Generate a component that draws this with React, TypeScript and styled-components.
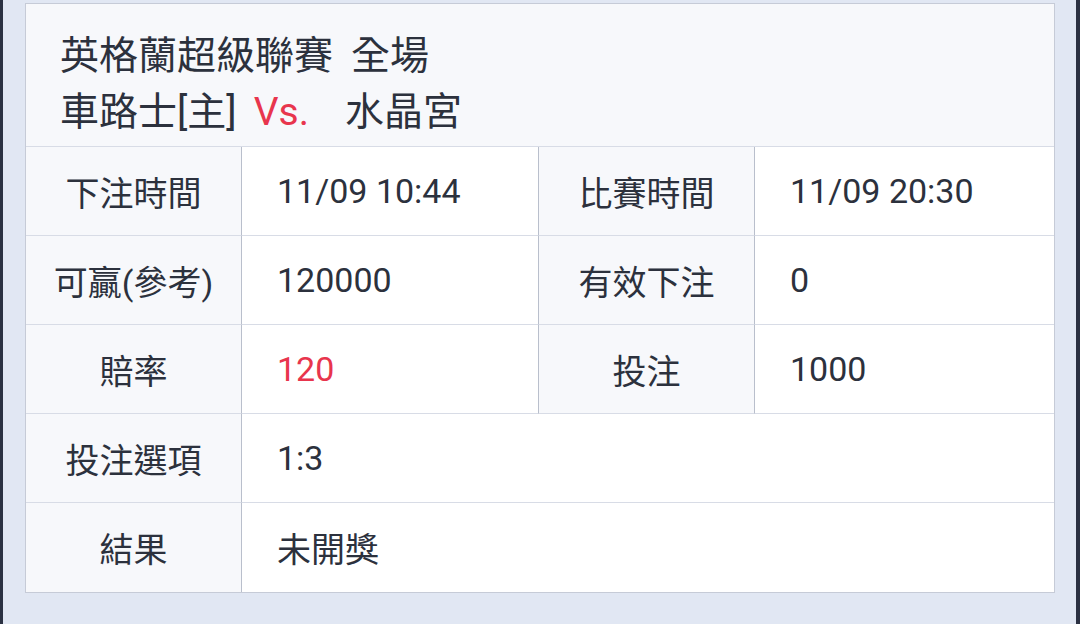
import React from 'react';
import styled, { createGlobalStyle } from 'styled-components';

const GlobalStyle = createGlobalStyle`
	html, body {
		margin: 0;
		padding: 0;
		background: #e1e7f3;
	}
	body {
		font-family: Roboto, "Noto Sans CJK TC", "Noto Sans", sans-serif;
		color: #2c313d;
	}
`;

const Screen = styled.div`
	width: 1080px;
	height: 624px;
	box-sizing: border-box;
	background: #e1e7f3;
	border-left: 3px solid #2b3142;
	border-right: 4px solid #2b3142;
	padding: 3px 21px 0 22px;
	overflow: hidden;
`;

const Card = styled.div`
	border: 1px solid #c6cbd7;
	background: #ffffff;
	display: flex;
	flex-direction: column;
`;

const Header = styled.div`
	height: 143px;
	box-sizing: border-box;
	background: #f7f8fb;
	border-bottom: 1px solid #d8dce6;
	padding: 24px 34px 0;
	font-size: 39px;
	line-height: 56px;
	display: flex;
	flex-direction: column;
`;

const HeaderLine = styled.div`
	display: flex;
	align-items: baseline;
	white-space: nowrap;
`;

const Part = styled.span<{ $gap?: number; $red?: boolean }>`
	margin-left: ${(p) => p.$gap ?? 0}px;
	color: ${(p) => (p.$red ? '#e8354d' : 'inherit')};
`;

const Grid = styled.div`
	display: grid;
	grid-template-columns: 216px 297px 216px 1fr;
	grid-auto-rows: 89px;
`;

const Cell = styled.div<{ $label?: boolean; $span?: number; $last?: boolean; $end?: boolean }>`
	display: flex;
	align-items: center;
	justify-content: ${(p) => (p.$label ? 'center' : 'flex-start')};
	padding-left: ${(p) => (p.$label ? '0' : '35px')};
	background: ${(p) => (p.$label ? '#f7f8fb' : '#ffffff')};
	grid-column: span ${(p) => p.$span ?? 1};
	border-bottom: ${(p) => (p.$last ? 'none' : '1px solid #d8dce6')};
	border-right: ${(p) => (p.$end ? 'none' : '1px solid #b9bfcc')};
	font-size: 34px;
`;

const Value = styled.span<{ $red?: boolean }>`
	color: ${(p) => (p.$red ? '#e8354d' : 'inherit')};
`;

type Row = { cells: { text: string; label?: boolean; red?: boolean; span?: number }[] };

const rows: Row[] = [
	{ cells: [{ text: '下注時間', label: true }, { text: '11/09 10:44' }, { text: '比賽時間', label: true }, { text: '11/09 20:30' }] },
	{ cells: [{ text: '可贏(參考)', label: true }, { text: '120000' }, { text: '有效下注', label: true }, { text: '0' }] },
	{ cells: [{ text: '賠率', label: true }, { text: '120', red: true }, { text: '投注', label: true }, { text: '1000' }] },
	{ cells: [{ text: '投注選項', label: true }, { text: '1:3', span: 3 }] },
	{ cells: [{ text: '結果', label: true }, { text: '未開獎', span: 3 }] },
];

const App = () => {
	return (
		<>
			<GlobalStyle />
			<Screen>
				<Card>
					<Header>
						<HeaderLine>
							<Part>英格蘭超級聯賽</Part>
							<Part $gap={18}>全場</Part>
						</HeaderLine>
						<HeaderLine>
							<Part>車路士[主]</Part>
							<Part $gap={17} $red>Vs.</Part>
							<Part $gap={36}>水晶宮</Part>
						</HeaderLine>
					</Header>
					<Grid>
						{rows.map((row, ri) =>
							row.cells.map((c, ci) => (
								<Cell
									key={`${ri}-${ci}`}
									$label={c.label}
									$span={c.span}
									$last={ri === rows.length - 1}
									$end={ci === row.cells.length - 1}
								>
									<Value $red={c.red}>{c.text}</Value>
								</Cell>
							))
						)}
					</Grid>
				</Card>
			</Screen>
		</>
	);
};

export default App;
